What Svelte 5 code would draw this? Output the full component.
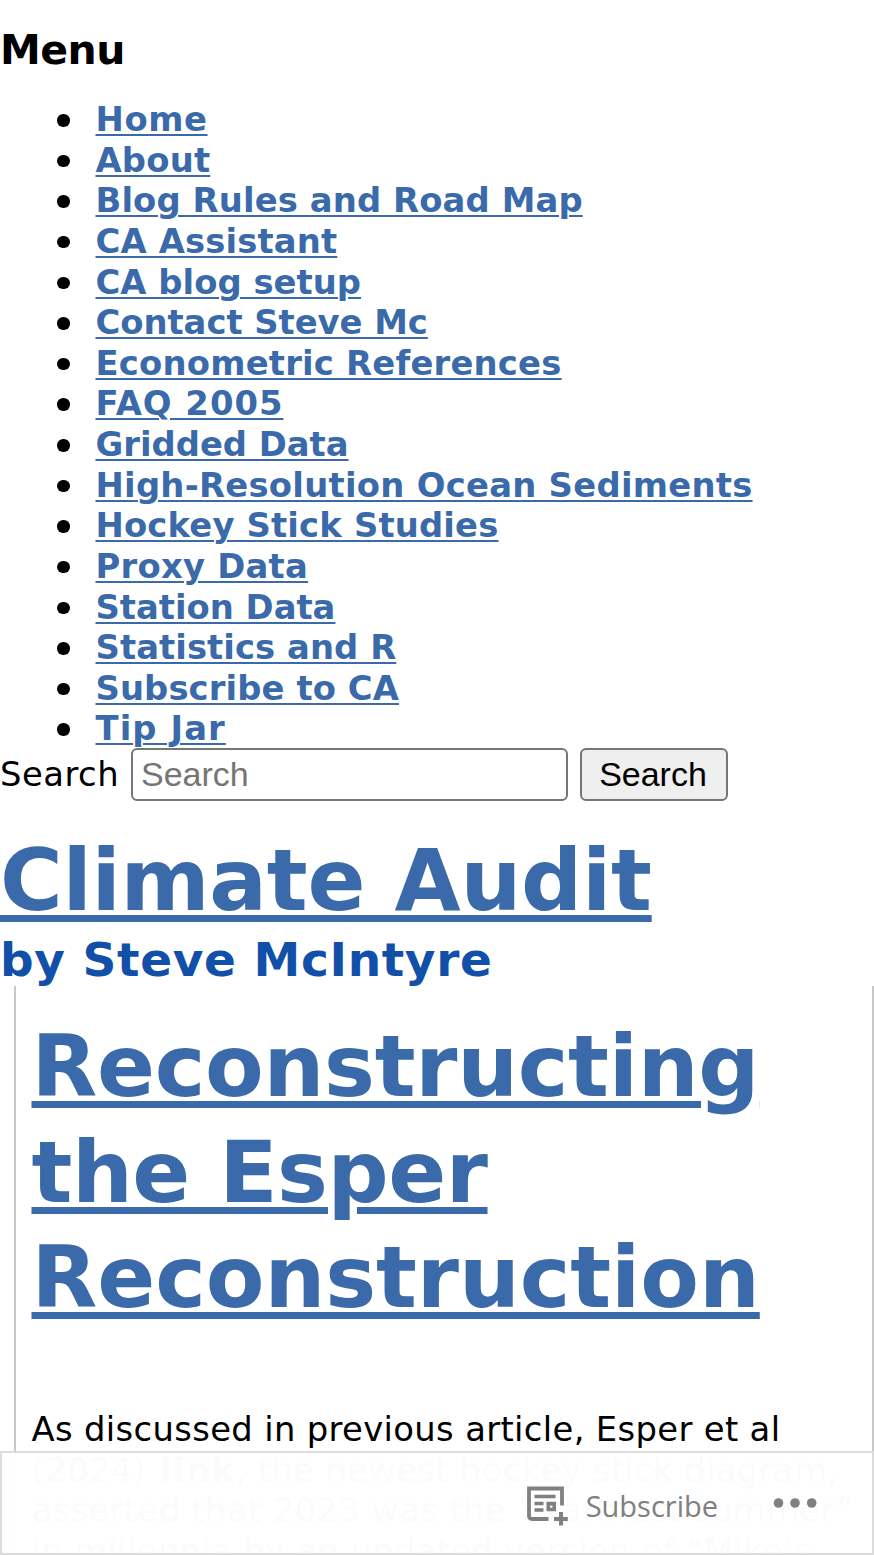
<script lang="ts">
    interface MenuItem {
        label: string;
        spacing: number;
    }

    const menuItems: MenuItem[] = [
        { label: "Home", spacing: 0.6 },
        { label: "About", spacing: 0.2 },
        { label: "Blog Rules and Road Map", spacing: 0.12 },
        { label: "CA Assistant", spacing: 0.15 },
        { label: "CA blog setup", spacing: 0.03 },
        { label: "Contact Steve Mc", spacing: -0.03 },
        { label: "Econometric References", spacing: 0.22 },
        { label: "FAQ 2005", spacing: 1 },
        { label: "Gridded Data", spacing: 0 },
        { label: "High-Resolution Ocean Sediments", spacing: 0.27 },
        { label: "Hockey Stick Studies", spacing: 0.17 },
        { label: "Proxy Data", spacing: 0.25 },
        { label: "Station Data", spacing: 0 },
        { label: "Statistics and R", spacing: 0.07 },
        { label: "Subscribe to CA", spacing: 0.1 },
        { label: "Tip Jar", spacing: 1.1 },
    ];
</script>

<div class="page">
    <nav>
        <h3>Menu</h3>
        <ul>
            {#each menuItems as item}
                <li>
                    <a href="#top" style="letter-spacing: {item.spacing}px">{item.label}</a>
                </li>
            {/each}
        </ul>
        <form>
            <label for="search">Search</label>
            <input id="search" type="text" placeholder="Search" />
            <button type="button">Search</button>
        </form>
    </nav>

    <header>
        <h1><a href="#top">Climate Audit</a></h1>
        <p>by Steve McIntyre</p>
    </header>

    <main>
        <h2>
            <a href="#top">
                <span class="first">Reconstructing</span><br />
                <span class="second">the Esper</span><br />
                <span class="third">Reconstruction</span>
            </a>
        </h2>
        <div class="entry">
            <div>As discussed in previous article, Esper et al</div>
            <div>(2024) <b>link</b>, the newest hockey stick diagram,</div>
            <div>asserted that 2023 was the “warmest summer”</div>
            <div>in millennia by an updated version of “Mike’s</div>
        </div>
    </main>

    <div class="actionbar">
        <a class="subscribe" href="#top">
            <svg width="42" height="40" viewBox="0 0 42 40" fill="none" stroke="#808080">
                <path d="M21.5 33H5Q2 33 2 30V2.5H35V19.5" stroke-width="3.8" />
                <path d="M7.5 10.5H28.5M7.5 17.5H16.5M7.5 24H16.5" stroke-width="3.4" />
                <path d="M21.3 17.6H27.2V23.5H21.3Z" stroke-width="3.6" />
                <path d="M34 26V39.5M27 33H40.8" stroke-width="4" />
            </svg>
            <span>Subscribe</span>
        </a>
        <svg class="dots" width="44" height="12" viewBox="0 0 44 12" fill="#808080">
            <circle cx="5.5" cy="6" r="4.8" />
            <circle cx="22" cy="6" r="4.8" />
            <circle cx="38.7" cy="6" r="4.8" />
        </svg>
    </div>
</div>

<style>
    :global(body) {
        background: #fff;
    }

    .page {
        position: relative;
        height: 1555px;
        overflow: hidden;
        font-family: Verdana, "DejaVu Sans", sans-serif;
        font-size: 33.8px;
        color: #000;
    }

    h1,
    h2,
    h3,
    p,
    ul {
        margin: 0;
    }

    a {
        color: #3a6aa9;
    }

    h3 {
        padding-top: 25px;
        font-size: 41px;
        line-height: 50px;
        letter-spacing: -0.5px;
    }

    ul {
        height: 648px;
        padding: 25px 0 0 57px;
        list-style: none;
    }

    li {
        display: flex;
        align-items: center;
        height: 40.63px;
        line-height: 40.63px;
    }

    li::before {
        content: "";
        width: 12.5px;
        height: 12.5px;
        margin: 0 26px 0 0;
        border-radius: 50%;
        background: #000;
    }

    li a {
        font-weight: bold;
        text-decoration-thickness: 2px;
        text-underline-offset: 3px;
    }

    form {
        display: flex;
        align-items: center;
        height: 53px;
    }

    label {
        width: 131px;
        letter-spacing: 0.5px;
    }

    input,
    button {
        box-sizing: border-box;
        height: 53px;
        border: 2px solid #767676;
        border-radius: 6px;
        font-family: "Liberation Sans", Arial, sans-serif;
        font-size: 34px;
    }

    input {
        width: 437px;
        padding: 0 8px;
        background: #fff;
    }

    input::placeholder {
        color: #757575;
    }

    button {
        width: 148px;
        margin-left: 12px;
        padding: 0 2px 0 0;
        background: #efefef;
        color: #000;
    }

    header {
        padding-top: 27px;
    }

    h1,
    h2 {
        font-size: 85.5px;
        line-height: 105.3px;
        white-space: nowrap;
    }

    h1 {
        letter-spacing: -0.27px;
    }

    h1 a,
    h2 a {
        text-decoration-thickness: 7px;
        text-underline-offset: 5px;
    }

    .first {
        letter-spacing: -0.3px;
    }

    .second {
        letter-spacing: -0.46px;
    }

    .third {
        letter-spacing: -0.08px;
    }

    header p {
        color: #114fa8;
        font-size: 47px;
        font-weight: bold;
        letter-spacing: 0.65px;
        line-height: 54px;
    }

    main {
        box-sizing: border-box;
        height: 700px;
        margin: -1px 0 0 14px;
        padding: 28px 0 0 15.5px;
        border-left: 2px solid #c8c8c8;
        border-right: 2px solid #c8c8c8;
    }

    .entry {
        padding-top: 80px;
        letter-spacing: 0.35px;
        line-height: 40.63px;
        white-space: nowrap;
    }

    .entry b {
        margin-left: 3px;
        letter-spacing: 1.4px;
    }

    .actionbar {
        position: absolute;
        right: 0;
        bottom: 0;
        left: 0;
        box-sizing: border-box;
        display: flex;
        align-items: center;
        justify-content: flex-end;
        height: 104px;
        padding-right: 55px;
        border: 2px solid #dcdcdc;
        background: rgba(255, 255, 255, 0.985);
    }

    .subscribe {
        display: flex;
        align-items: center;
        margin-top: 5px;
        color: #808080;
        font-family: "Open Sans", "Noto Sans", sans-serif;
        font-size: 29px;
        text-decoration: none;
    }

    .subscribe span {
        margin-left: 17px;
    }

    .dots {
        margin: -1px 0 0 55px;
    }
</style>
